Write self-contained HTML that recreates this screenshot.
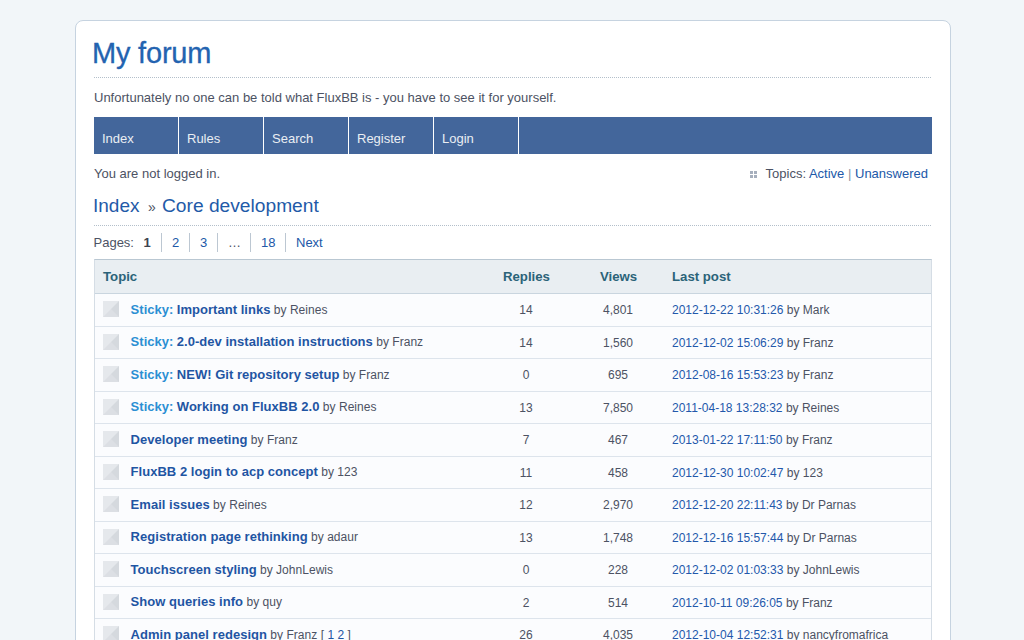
<!DOCTYPE html>
<html><head><meta charset="utf-8">
<style>
html,body{margin:0;padding:0;}
body{width:1024px;height:640px;overflow:hidden;background:#f2f6f9;font-family:"Liberation Sans",sans-serif;font-size:13px;color:#4c5263;position:relative;}
#wrap{position:absolute;left:75px;top:20px;width:874px;height:700px;background:#fff;border:1px solid #c6d3e0;border-radius:8px;}
.abs{position:absolute;white-space:nowrap;}
a{color:#2158a8;text-decoration:none;}
#title{left:92px;top:37px;font-size:29px;letter-spacing:-0.2px;-webkit-text-stroke:0.3px #2363b0;line-height:32px;color:#2363b0;}
.dot{position:absolute;left:94px;width:838px;height:1px;background:repeating-linear-gradient(to right,#b3bfca 0 1px,transparent 1px 2px);}
#desc{left:94px;top:90px;font-size:13px;line-height:16px;}
#nav{position:absolute;left:94px;top:117px;width:838px;height:37px;background:#43669b;}
#nav span{position:absolute;top:0;height:37px;width:84px;border-right:1px solid #fff;color:#edf1f6;font-size:13px;line-height:16px;box-sizing:content-box;}
#nav span i{position:absolute;left:8px;top:14px;font-style:normal;font-size:13px;color:#eaeef3;}
#status{left:94px;top:166px;line-height:16px;}
#topics{right:96px;top:166px;line-height:16px;}
#ticon{position:absolute;left:750px;top:171px;width:7px;height:7px;}
#ticon b{position:absolute;width:3px;height:3px;background:#a6afbd;}
#crumbs{left:93px;top:194px;font-size:19px;line-height:24px;}
#crumbs2{left:162px;top:194px;font-size:19.2px;line-height:24px;}
#raq{left:148px;top:199px;font-size:14px;line-height:16px;color:#4c5263;}
#crumbs a,#crumbs2 a{color:#1f5aa8;}
#pages{left:93.5px;top:235px;line-height:16px;}
.psep{position:absolute;top:233px;width:1px;height:19px;background:#bcc7d2;}
#tbl{position:absolute;left:94px;top:259px;width:836px;border:1px solid #d5dde5;border-top-color:#b9c7d2;border-bottom:none;background:#fbfcfe;}
#thead{position:relative;height:33px;background:#e9eef2;border-bottom:1px solid #c9d5df;}
#thead b{position:absolute;top:9.6px;font-size:13.2px;line-height:14px;color:#2b6379;}
.row{position:relative;height:31.55px;border-bottom:1px solid #dde4ec;}
.row .ic{position:absolute;left:8px;top:7px;width:0;height:0;border-style:solid;border-width:8px;border-color:#e5e8ec #d5d9de #dcdfe4 #e5e8ec;}
.row .t{position:absolute;left:35.6px;letter-spacing:0.03px;top:7.5px;font-size:12px;line-height:16px;}
.row .t a{font-size:13px;font-weight:bold;color:#1f55a3;}
.row .t a.st{color:#2b8fd3;}
.row .n{position:absolute;top:8px;width:60px;text-align:center;font-size:12px;line-height:16px;}
.row .n.r{left:401px;}
.row .n.v{left:493px;}
.row .l{position:absolute;left:577px;top:8px;font-size:12px;line-height:16px;}
.row .l a{color:#2358ab;}
</style></head><body>
<div id="wrap"></div>
<div class="abs" id="title">My forum</div>
<div class="dot" style="top:77px"></div>
<div class="abs" id="desc">Unfortunately no one can be told what FluxBB is - you have to see it for yourself.</div>
<div id="nav">
<span style="left:0"><i>Index</i></span>
<span style="left:85px"><i>Rules</i></span>
<span style="left:170px"><i>Search</i></span>
<span style="left:255px"><i>Register</i></span>
<span style="left:340px"><i>Login</i></span>
</div>
<div class="abs" id="status">You are not logged in.</div>
<div id="ticon"><b style="left:0;top:0"></b><b style="left:4px;top:0"></b><b style="left:0;top:4px"></b><b style="left:4px;top:4px"></b></div>
<div class="abs" id="topics">Topics: <a>Active</a> <span style="color:#8a93a2">|</span> <a>Unanswered</a></div>
<div class="abs" id="crumbs"><a>Index</a></div><div class="abs" id="raq">»</div><div class="abs" id="crumbs2"><a>Core development</a></div>
<div class="dot" style="top:225px"></div>
<div class="abs" id="pages">Pages:</div><div class="abs" style="left:143.5px;top:235px;line-height:16px;font-weight:bold;color:#3d4450">1</div>
<div class="psep" style="left:161px"></div>
<div class="abs" style="left:172px;top:235px;line-height:16px"><a>2</a></div>
<div class="psep" style="left:189px"></div>
<div class="abs" style="left:200px;top:235px;line-height:16px"><a>3</a></div>
<div class="psep" style="left:217px"></div>
<div class="abs" style="left:228px;top:235px;line-height:16px">…</div>
<div class="psep" style="left:250px"></div>
<div class="abs" style="left:261px;top:235px;line-height:16px"><a>18</a></div>
<div class="psep" style="left:285px"></div>
<div class="abs" style="left:296px;top:235px;line-height:16px"><a>Next</a></div>

<div id="tbl">
<div id="thead"><b style="left:8px">Topic</b><b style="left:408px">Replies</b><b style="left:505px">Views</b><b style="left:577px">Last post</b></div>
<div class="row"><i class="ic"></i><div class="t"><a class="st">Sticky:</a> <a>Important links</a> by Reines</div><div class="n r">14</div><div class="n v">4,801</div><div class="l"><a>2012-12-22 10:31:26</a> by Mark</div></div>
<div class="row"><i class="ic"></i><div class="t"><a class="st">Sticky:</a> <a>2.0-dev installation instructions</a> by Franz</div><div class="n r">14</div><div class="n v">1,560</div><div class="l"><a>2012-12-02 15:06:29</a> by Franz</div></div>
<div class="row"><i class="ic"></i><div class="t"><a class="st">Sticky:</a> <a>NEW! Git repository setup</a> by Franz</div><div class="n r">0</div><div class="n v">695</div><div class="l"><a>2012-08-16 15:53:23</a> by Franz</div></div>
<div class="row"><i class="ic"></i><div class="t"><a class="st">Sticky:</a> <a>Working on FluxBB 2.0</a> by Reines</div><div class="n r">13</div><div class="n v">7,850</div><div class="l"><a>2011-04-18 13:28:32</a> by Reines</div></div>
<div class="row"><i class="ic"></i><div class="t"><a>Developer meeting</a> by Franz</div><div class="n r">7</div><div class="n v">467</div><div class="l"><a>2013-01-22 17:11:50</a> by Franz</div></div>
<div class="row"><i class="ic"></i><div class="t"><a>FluxBB 2 login to acp concept</a> by 123</div><div class="n r">11</div><div class="n v">458</div><div class="l"><a>2012-12-30 10:02:47</a> by 123</div></div>
<div class="row"><i class="ic"></i><div class="t"><a>Email issues</a> by Reines</div><div class="n r">12</div><div class="n v">2,970</div><div class="l"><a>2012-12-20 22:11:43</a> by Dr Parnas</div></div>
<div class="row"><i class="ic"></i><div class="t"><a>Registration page rethinking</a> by adaur</div><div class="n r">13</div><div class="n v">1,748</div><div class="l"><a>2012-12-16 15:57:44</a> by Dr Parnas</div></div>
<div class="row"><i class="ic"></i><div class="t"><a>Touchscreen styling</a> by JohnLewis</div><div class="n r">0</div><div class="n v">228</div><div class="l"><a>2012-12-02 01:03:33</a> by JohnLewis</div></div>
<div class="row"><i class="ic"></i><div class="t"><a>Show queries info</a> by quy</div><div class="n r">2</div><div class="n v">514</div><div class="l"><a>2012-10-11 09:26:05</a> by Franz</div></div>
<div class="row"><i class="ic"></i><div class="t"><a>Admin panel redesign</a> by Franz [ <a style="font-weight:normal;font-size:12px">1</a> <a style="font-weight:normal;font-size:12px">2</a> ]</div><div class="n r">26</div><div class="n v">4,035</div><div class="l"><a>2012-10-04 12:52:31</a> by nancyfromafrica</div></div>
</div>
</body></html>
